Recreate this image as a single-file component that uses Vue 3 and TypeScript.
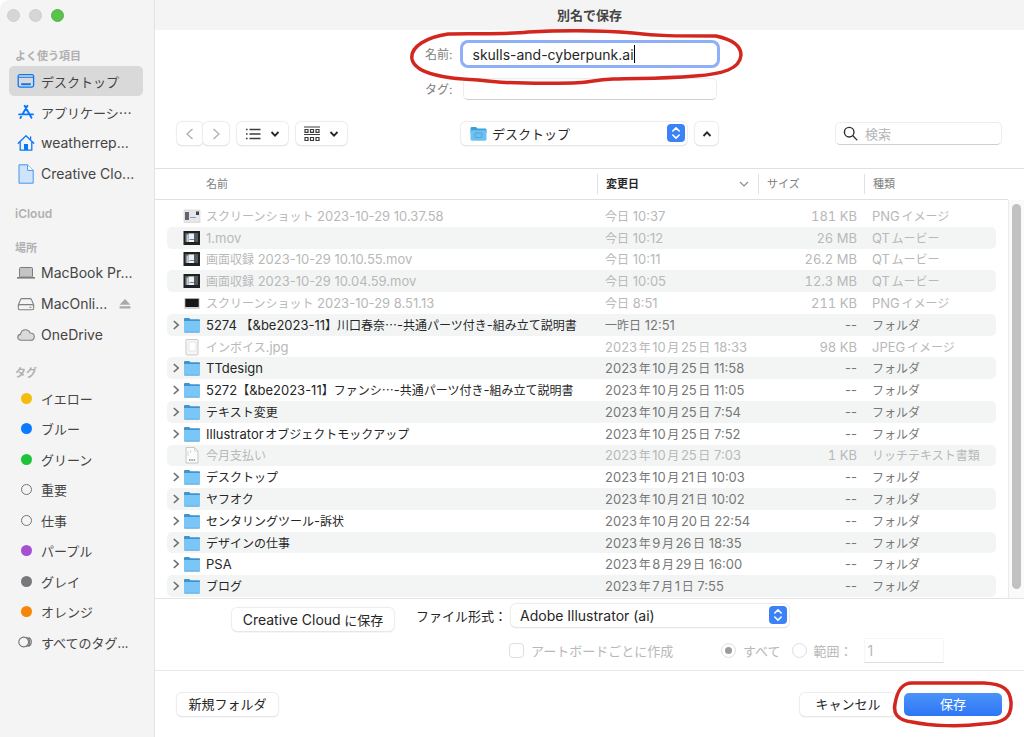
<script setup lang="ts">
import { ref } from 'vue'

type FileIcon = 'folder' | 'shot' | 'movie' | 'dark' | 'jpeg' | 'rtf'

interface FileRow {
  name: string
  date: string
  size: string
  kind: string
  icon: FileIcon
}

const fileName = ref('skulls-and-cyberpunk.ai')
const tags = ref('')
const query = ref('')
const scope = ref('all')

const folder = (name: string, date: string): FileRow => ({ name, date, size: '--', kind: 'フォルダ', icon: 'folder' })

const rows: FileRow[] = [
  { name: 'スクリーンショット 2023-10-29 10.37.58', date: '今日 10:37', size: '181 KB', kind: 'PNGイメージ', icon: 'shot' },
  { name: '1.mov', date: '今日 10:12', size: '26 MB', kind: 'QTムービー', icon: 'movie' },
  { name: '画面収録 2023-10-29 10.10.55.mov', date: '今日 10:11', size: '26.2 MB', kind: 'QTムービー', icon: 'movie' },
  { name: '画面収録 2023-10-29 10.04.59.mov', date: '今日 10:05', size: '12.3 MB', kind: 'QTムービー', icon: 'movie' },
  { name: 'スクリーンショット 2023-10-29 8.51.13', date: '今日 8:51', size: '211 KB', kind: 'PNGイメージ', icon: 'dark' },
  folder('5274 【&be2023-11】川口春奈…-共通パーツ付き-組み立て説明書', '一昨日 12:51'),
  { name: 'インボイス.jpg', date: '2023年10月25日 18:33', size: '98 KB', kind: 'JPEGイメージ', icon: 'jpeg' },
  folder('TTdesign', '2023年10月25日 11:58'),
  folder('5272【&be2023-11】ファンシ…-共通パーツ付き-組み立て説明書', '2023年10月25日 11:05'),
  folder('テキスト変更', '2023年10月25日 7:54'),
  folder('Illustratorオブジェクトモックアップ', '2023年10月25日 7:52'),
  { name: '今月支払い', date: '2023年10月25日 7:03', size: '1 KB', kind: 'リッチテキスト書類', icon: 'rtf' },
  folder('デスクトップ', '2023年10月21日 10:03'),
  folder('ヤフオク', '2023年10月21日 10:02'),
  folder('センタリングツール-訴状', '2023年10月20日 22:54'),
  folder('デザインの仕事', '2023年9月26日 18:35'),
  folder('PSA', '2023年8月29日 16:00'),
  folder('ブログ', '2023年7月1日 7:55'),
]

const tagItems = [
  { name: 'イエロー', tone: 'yellow' },
  { name: 'ブルー', tone: 'blue' },
  { name: 'グリーン', tone: 'green' },
  { name: '重要', tone: 'hollow' },
  { name: '仕事', tone: 'hollow' },
  { name: 'パープル', tone: 'purple' },
  { name: 'グレイ', tone: 'gray' },
  { name: 'オレンジ', tone: 'orange' },
]

// Japanese runs are set one size smaller than Latin ones, in the CJK family.
const pieces = (text: string) =>
  text
    .split(/([\u2026\u3000-\u9fff]+)/)
    .filter(Boolean)
    .map((part) => ({ part, cjk: /[\u2026\u3000-\u9fff]/.test(part) }))
</script>

<template>
  <div class="dialog">
    <nav class="sidebar" aria-label="サイドバー">
      <div class="lights">
        <button type="button" class="light" aria-label="閉じる"></button>
        <button type="button" class="light" aria-label="しまう"></button>
        <button type="button" class="light zoom" aria-label="拡大"></button>
      </div>

      <h2>よく使う項目</h2>
      <ul>
        <li>
          <a href="#desktop" class="item current">
            <svg class="glyph" viewBox="0 0 18 18" fill="none" stroke="#0a78fa" stroke-width="1.3">
              <rect x="1.2" y="2.7" width="15.4" height="12.4" rx="1.8" />
              <path d="M1.5 5.3h15" stroke-width="1" />
              <rect x="4.2" y="11.2" width="9.6" height="2" fill="#0a78fa" stroke="none" />
            </svg>
            <span class="cjk">デスクトップ</span>
          </a>
        </li>
        <li>
          <a href="#applications" class="item">
            <svg class="glyph" viewBox="0 0 18 18" fill="none" stroke="#0a78fa" stroke-width="1.9" stroke-linecap="round">
              <path d="M10.4 2.8 5.5 11.2M7.6 2.8l6.9 12M4.1 13.8l-.7 1.1M2.2 11.4h8.6M13.2 11.4h2.8" />
            </svg>
            <span class="cjk">アプリケーシ…</span>
          </a>
        </li>
        <li>
          <a href="#home" class="item">
            <svg class="glyph" viewBox="0 0 18 18" fill="none" stroke="#0a78fa" stroke-width="1.3" stroke-linejoin="round" stroke-linecap="round">
              <path d="M1.2 9.2 9 1.8l7.8 7.4M3.2 7.8v8.4h11.6V7.8M13.6 5.6V2.8" />
              <path d="M7 16V10h4v6z" fill="#0a78fa" stroke="none" />
            </svg>
            <span>weatherrep...</span>
          </a>
        </li>
        <li>
          <a href="#creative-cloud" class="item">
            <svg class="glyph tall" viewBox="0 0 18 20" fill="#cfe3fa" stroke="#4a94ee" stroke-width="1" stroke-linejoin="round">
              <path d="M2 .8h8.6l5.6 5.6v12.8H2z" />
              <path d="M10.6.8v5.6h5.6" fill="#fff" />
            </svg>
            <span>Creative Clo...</span>
          </a>
        </li>
      </ul>

      <h2 class="cloud">iCloud</h2>

      <h2 class="places">場所</h2>
      <ul>
        <li>
          <a href="#macbook" class="item">
            <svg class="glyph" viewBox="0 0 18 18" fill="#c4c4c4" stroke="#7c7c7c">
              <rect x="2.5" y="3.5" width="13" height="9.6" rx="1" />
              <path d="M0 13.8h18" stroke-width="1.6" />
            </svg>
            <span>MacBook Pr...</span>
          </a>
        </li>
        <li>
          <a href="#maconline" class="item">
            <svg class="glyph" viewBox="0 0 18 18" fill="none" stroke="#808080" stroke-width="1.1" stroke-linejoin="round">
              <path d="M5 3.6h8c.8 0 1.2.3 1.5 1l2.2 5.4v3c0 1.1-.7 1.8-1.8 1.8H3.1c-1.1 0-1.8-.7-1.8-1.8v-3l2.2-5.4c.3-.7.7-1 1.5-1z" />
              <path d="M1.5 10.4c.5-.6 1-.8 1.8-.8h11.4c.8 0 1.3.2 1.8.8M12.4 12.3h2" />
            </svg>
            <span>MacOnli...</span>
            <svg class="eject" viewBox="0 0 12 12" fill="#a9a9a9"><path d="M6 1l5.4 5.8H.6zM.6 8.3h10.8v2.2H.6z" /></svg>
          </a>
        </li>
        <li>
          <a href="#onedrive" class="item">
            <svg class="glyph" viewBox="0 0 18 18" fill="#dadada" stroke="#808080" stroke-width="1.1">
              <path d="M4.3 14.3C2.2 14.3.8 13 .8 11.3c0-1.6 1.2-2.8 2.7-2.900C3.9 5.500 6 3.700 8.500 3.700c2.200 0 3.900 1.300 4.600 3.300 2.400 0 4.200 1.500 4.200 3.700 0 2.100-1.600 3.600-3.800 3.600z" />
            </svg>
            <span>OneDrive</span>
          </a>
        </li>
      </ul>

      <h2 class="tag-title">タグ</h2>
      <ul class="tag-list">
        <li v-for="tag in tagItems" :key="tag.name">
          <a href="#tags" class="item"><i class="dot" :class="tag.tone"></i><span class="cjk">{{ tag.name }}</span></a>
        </li>
        <li>
          <a href="#all-tags" class="item">
            <svg class="glyph" viewBox="0 0 18 18" fill="none" stroke="#757575" stroke-width="1.1">
              <circle cx="6.7" cy="9" r="4.9" />
              <path d="M9.2 4.3a4.900 4.900 0 0 1 0 9.400M11.600 4.600a4.900 4.900 0 0 1 0 8.800" />
            </svg>
            <span class="cjk">すべてのタグ...</span>
          </a>
        </li>
      </ul>
    </nav>

    <main class="panel">
      <header class="titlebar"><h1>別名で保存</h1></header>

      <div class="fields">
        <label for="file-name">名前:</label>
        <div class="name-wrap">
          <input id="file-name" v-model="fileName" class="text-field focused" type="text" />
          <i class="caret"></i>
          <svg class="mark name-mark" viewBox="0 0 336 60" fill="none" stroke="#d3261f" stroke-width="3.5" stroke-linecap="round" stroke-linejoin="round">
            <path d="M40 5C60 4 95 6 120 3C160 1 190 1 225 4C250 7 265 7 308 7C322 10 333 16 333 26C332 40 315 45 287 47C250 50 235 49 205 50C185 51 180 54 165 54C120 55 85 53 70 51C40 50 7 45 4 30C2 17 20 8 40 5Z" />
          </svg>
        </div>
        <label for="file-tags">タグ:</label>
        <input id="file-tags" v-model="tags" class="text-field" type="text" />
      </div>

      <div class="toolbar">
        <div class="tools">
          <div class="history">
            <button type="button" class="push nav" aria-label="戻る"><svg viewBox="0 0 10 14"><path d="M7.5 2 2 7l5.5 5" /></svg></button>
            <button type="button" class="push nav" aria-label="進む"><svg viewBox="0 0 10 14"><path d="M2.5 2 8 7l-5.5 5" /></svg></button>
          </div>
          <button type="button" class="push view" aria-label="リスト表示">
            <svg class="view-icon" viewBox="0 0 16 16" stroke="#3c3c3c" stroke-width="1.3">
              <path d="M4.5 3.5h11M4.5 8h11M4.5 12.5h11M1 3.5h1.6M1 8h1.6M1 12.5h1.6" />
            </svg>
            <svg class="chev" viewBox="0 0 10 6"><path d="M1.5 1 5 4.6 8.5 1" /></svg>
          </button>
          <button type="button" class="push view" aria-label="グループ">
            <svg class="view-icon" viewBox="0 0 16 16" fill="none" stroke="#3c3c3c" stroke-width="1.2">
              <path d="M0 1h16M0 8.5h16" />
              <path d="M1 3.5h3v2.8H1zM6.5 3.5h3v2.8h-3zM12 3.5h3v2.8h-3zM1 11.5h3v3H1zM6.5 11.5h3v3h-3zM12 11.5h3v3h-3z" />
            </svg>
            <svg class="chev" viewBox="0 0 10 6"><path d="M1.5 1 5 4.6 8.5 1" /></svg>
          </button>
        </div>

        <div class="location">
          <div class="popup place">
            <svg class="popup-folder" viewBox="0 0 17 16">
              <path d="M.5 2.5C.5 1.6 1 1 2 1h4l1.5 1.4H15c1 0 1.5.6 1.5 1.5v3H.5z" fill="#3f9ed3" />
              <path d="M.5 4.3h16v9c0 .9-.6 1.4-1.5 1.4H2c-.9 0-1.5-.5-1.5-1.4z" fill="#6dc2f1" />
              <rect x="5" y="7" width="7" height="4.6" rx=".6" fill="none" stroke="#4aa6d8" />
            </svg>
            <select aria-label="場所"><option>デスクトップ</option></select>
            <svg class="stepper" viewBox="0 0 18 18"><rect width="18" height="18" rx="4" /><path d="M5.8 7 9 3.9 12.2 7M5.8 11 9 14.1 12.2 11" /></svg>
          </div>
          <button type="button" class="push up" aria-label="折りたたむ"><svg class="chev" viewBox="0 0 10 6"><path d="M1.5 5 5 1.4 8.5 5" /></svg></button>
        </div>

        <div class="search">
          <svg viewBox="0 0 16 16" fill="none" stroke="#303030" stroke-width="1.5" stroke-linecap="round"><circle cx="6.6" cy="6.6" r="5.1" /><path d="m10.5 10.5 4.3 4.3" /></svg>
          <input v-model="query" type="search" placeholder="検索" aria-label="検索" />
        </div>
      </div>

      <div class="browser">
        <table>
          <thead>
            <tr>
              <th scope="col" class="c-name">名前</th>
              <th scope="col" class="sorted">変更日<svg viewBox="0 0 10 6"><path d="M1 1l4 4 4-4" /></svg></th>
              <th scope="col">サイズ</th>
              <th scope="col">種類</th>
            </tr>
          </thead>
          <tbody>
            <tr v-for="row in rows" :key="row.name" :class="{ dim: row.icon !== 'folder' }">
              <td class="name">
                <svg v-if="row.icon === 'folder'" class="disclose" viewBox="0 0 8 10"><path d="M1.8 1 6.2 5 1.8 9" /></svg>
                <i v-else class="disclose"></i>
                <svg class="file" viewBox="0 0 18 18">
                  <template v-if="row.icon === 'folder'">
                    <path d="M1 3.2C1 2.4 1.5 2 2.2 2h4l1.3 1.3h8.3c.8 0 1.2.5 1.2 1.2V8H1z" fill="#3f93cf" />
                    <path d="M1 5h16v10.4c0 .8-.5 1.2-1.2 1.2H2.2c-.7 0-1.2-.4-1.2-1.2z" fill="#7ac6f6" />
                    <path d="M1.6 16.2h14.8" stroke="#57a5d8" stroke-width=".8" />
                  </template>
                  <template v-else-if="row.icon === 'shot'">
                    <rect x="1" y="3" width="16" height="12.5" fill="#e6e6e8" stroke="#cfcfcf" stroke-width=".6" />
                    <path d="M2 5h4v8H2z" fill="#64666a" /><path d="M13 4.5h3V8h-3z" fill="#3f4144" />
                    <path d="M7 10.5h6" stroke="#6f9fe8" />
                  </template>
                  <template v-else-if="row.icon === 'movie'">
                    <rect x=".5" y="2" width="16.5" height="14" fill="#1f2123" />
                    <rect x="2" y="4" width="13" height="9" fill="#56595c" />
                    <path d="M5.500 4.500H11V13H5.500z" fill="#f0f1f2" /><path d="M3.500 5.500h2V13h-2z" fill="#c8cbce" />
                    <path d="M6.500 10.500H11" stroke="#4a8be0" />
                  </template>
                  <template v-else-if="row.icon === 'dark'">
                    <rect x="1.3" y="4" width="15.4" height="11" fill="#d2d2d2" />
                    <rect x="2.3" y="4.8" width="13.4" height="8.2" fill="#161616" />
                  </template>
                  <template v-else-if="row.icon === 'jpeg'">
                    <rect x="3" y="1.5" width="12" height="15.5" rx=".8" fill="#f7f7f7" stroke="#c9c9c9" />
                    <path d="M6 4h7v9H6z" fill="#fff" stroke="#ddd" stroke-width=".7" />
                  </template>
                  <template v-else>
                    <path d="M3 1.5h8.5L15 5v12H3z" fill="#fbfbfb" stroke="#c6c6c6" />
                    <path d="M11.5 1.5V5H15M5 5v5M7.5 4v3" fill="none" stroke="#d0d0d0" stroke-width=".8" />
                    <path d="M6 14h1.5M8.3 14h1.5M10.6 14h1.5" stroke="#8a8a8a" stroke-width="1.4" />
                  </template>
                </svg>
                <span class="label"><span v-for="(p, i) in pieces(row.name)" :key="i" :class="{ cjk: p.cjk }">{{ p.part }}</span></span>
              </td>
              <td><span v-for="(p, i) in pieces(row.date)" :key="i" :class="{ cjk: p.cjk }">{{ p.part }}</span></td>
              <td class="size">{{ row.size }}</td>
              <td><span v-for="(p, i) in pieces(row.kind)" :key="i" :class="{ cjk: p.cjk }">{{ p.part }}</span></td>
            </tr>
          </tbody>
        </table>
        <div class="scrollbar"><i></i></div>
      </div>

      <div class="options">
        <button type="button" class="push cloud-save"><span><span class="latin">Creative Cloud</span> に保存</span></button>
        <div class="format">
          <div class="format-row">
            <label for="format">ファイル形式：</label>
            <div class="popup kind">
              <select id="format"><option>Adobe Illustrator (ai)</option></select>
              <svg class="stepper" viewBox="0 0 18 18"><rect width="18" height="18" rx="4" /><path d="M5.8 7 9 3.9 12.2 7M5.8 11 9 14.1 12.2 11" /></svg>
            </div>
          </div>
          <div class="board-row">
            <label class="choice board"><input type="checkbox" disabled />アートボードごとに作成</label>
            <label class="choice"><input v-model="scope" type="radio" value="all" disabled />すべて</label>
            <label class="choice"><input v-model="scope" type="radio" value="range" disabled />範囲：</label>
            <input class="range" type="text" value="1" disabled aria-label="範囲" />
          </div>
        </div>
      </div>

      <footer class="actions">
        <button type="button" class="push new-folder">新規フォルダ</button>
        <button type="button" class="push cancel">キャンセル</button>
        <div class="save-wrap">
          <button type="button" class="save">保存</button>
          <svg class="mark save-mark" viewBox="0 0 122 48" fill="none" stroke="#d3261f" stroke-width="3.5" stroke-linecap="round" stroke-linejoin="round">
            <path d="M20 3H92C112 4 118 10 119 22C120 38 112 43 90 44C68 47 40 46 20 42C5 40 1 33 3 24C5 12 9 3 20 3Z" />
          </svg>
        </div>
      </footer>
    </main>
  </div>
</template>

<style>
body {
  margin: 0;
  background: #fff;
}
</style>

<style scoped>
.dialog {
  display: flex;
  min-height: 100vh;
  font: 13px/20px Inter, "Noto Sans CJK JP", sans-serif;
  color: #262626;
  background: #fff;
}
.dialog *,
.dialog *::before {
  box-sizing: border-box;
}
button,
input,
select {
  font: inherit;
  color: inherit;
  margin: 0;
}
.cjk {
  font-family: "Noto Sans CJK JP", sans-serif;
  line-height: 1;
}
.latin {
  font-size: 14px;
}

/* sidebar */
.sidebar {
  display: flex;
  flex-direction: column;
  flex: none;
  width: 155px;
  padding: 0 11px 79px 9px;
  background: #f4f4f4;
  border-right: 1px solid #e3e3e3;
  border-top-left-radius: 9px;
}
.lights {
  display: flex;
  gap: 9px;
  height: 46px;
  padding-top: 9px;
  margin-left: -2px;
}
.light {
  width: 13px;
  height: 13px;
  padding: 0;
  border: 1px solid #cdcdcd;
  border-radius: 50%;
  background: #d6d6d6;
}
.light.zoom {
  border-color: #51b445;
  background: #5bc24e;
}
.sidebar h2 {
  margin: 0 0 0 6px;
  font-size: 11px;
  line-height: 20px;
  font-weight: 600;
  color: #b0b0b0;
}
.sidebar h2.cloud {
  margin-top: 15px;
  font-size: 12px;
}
.sidebar h2.places {
  margin-top: 14px;
}
.sidebar h2.tag-title {
  margin-top: 13px;
}
.sidebar ul {
  display: grid;
  gap: 1px;
  margin: 0;
  padding: 0;
  list-style: none;
}
.sidebar ul.tag-list {
  flex: 1;
  gap: 0;
  grid-auto-rows: 1fr;
}
.item {
  display: flex;
  align-items: center;
  gap: 6px;
  height: 30px;
  padding-left: 8px;
  border-radius: 5px;
  font-size: 14px;
  color: #454545;
  text-decoration: none;
  white-space: nowrap;
}
.item .cjk {
  font-size: 13px;
}
.item.current {
  background: #d9d9d9;
}
.glyph {
  flex: none;
  width: 18px;
  height: 18px;
}
.glyph.tall {
  height: 20px;
}
.eject {
  width: 12px;
  height: 12px;
  margin-left: 6px;
}
.dot {
  width: 11px;
  height: 11px;
  margin: 0 3px 0 4px;
  border-radius: 50%;
}
.yellow { background: #f2bd0c; }
.blue { background: #0a7aff; }
.green { background: #1ec337; }
.purple { background: #a550d2; }
.gray { background: #78787c; }
.orange { background: #f58608; }
.hollow { border: 1px solid #757575; }

/* panel */
.panel {
  display: flex;
  flex-direction: column;
  flex: 1;
  min-width: 0;
}
.titlebar {
  height: 30px;
  background: #f4f4f4;
}
.titlebar h1 {
  margin: 0;
  font-size: 13px;
  line-height: 30px;
  font-weight: 600;
  text-align: center;
  color: #454545;
}
.fields {
  display: grid;
  grid-template-columns: 1fr 254px 1fr;
  gap: 13px 10px;
  padding-top: 13px;
}
.fields label {
  grid-column: 1;
  font-size: 12px;
  line-height: 24px;
  height: 22px;
  text-align: right;
  color: #808080;
}
.name-wrap {
  position: relative;
}
.text-field {
  display: block;
  width: 100%;
  height: 22px;
  padding: 0 9px;
  border: 1px solid #ececec;
  border-bottom-color: #cfcfcf;
  border-radius: 5px;
  background: #fff;
  font-size: 14px;
  outline: none;
}
.text-field.focused {
  border-color: #fff;
  box-shadow: 0 0 0 3px #8fb0f8;
}
.caret {
  position: absolute;
  top: 2px;
  left: 171px;
  width: 1px;
  height: 18px;
  background: #000;
}
.mark {
  position: absolute;
  pointer-events: none;
}
.name-mark {
  top: -14px;
  left: -55px;
  width: 336px;
  height: 60px;
}

/* toolbar */
.toolbar {
  display: grid;
  grid-template-columns: 1fr 257px 1fr;
  padding: 22px 22px 23px;
}
.tools,
.location,
.history {
  display: flex;
}
.tools,
.location {
  gap: 8px;
}
.push {
  display: flex;
  align-items: center;
  justify-content: center;
  height: 23px;
  padding: 0;
  border: 0;
  border-radius: 5px;
  background: #fff;
  box-shadow: 0 0 1px 1px #ececec, 0 1px 1px #bdbdbd;
}
.push.nav {
  width: 26px;
}
.nav svg {
  width: 10px;
  height: 14px;
  fill: none;
  stroke: #adadad;
  stroke-width: 1.3;
}
.push.view {
  gap: 9px;
  width: 51px;
}
.view-icon {
  width: 16px;
  height: 16px;
}
.chev {
  width: 10px;
  height: 6px;
  fill: none;
  stroke: #262626;
  stroke-width: 1.8;
}
.popup {
  position: relative;
  height: 23px;
  border-radius: 5px;
  background: #fff;
  box-shadow: 0 0 1px 1px #ececec, 0 1px 1px #bdbdbd;
}
.popup select {
  display: block;
  width: 100%;
  height: 23px;
  padding: 0 24px 0 9px;
  border: 0;
  background: none;
  appearance: none;
  outline: none;
}
.popup.kind select {
  font-size: 14px;
}
.popup.place {
  width: 226px;
}
.popup.place select {
  padding-left: 31px;
}
.popup-folder {
  position: absolute;
  top: 4px;
  left: 9px;
  width: 17px;
  height: 16px;
}
.stepper {
  position: absolute;
  top: 2px;
  right: 2px;
  width: 18px;
  height: 18px;
  fill: none;
  stroke: #fff;
  stroke-width: 1.6;
  stroke-linecap: round;
  stroke-linejoin: round;
  pointer-events: none;
}
.stepper rect {
  fill: #3b82f7;
  stroke: none;
}
.push.up {
  width: 23px;
}
.search {
  display: flex;
  align-items: center;
  justify-self: end;
  gap: 7px;
  width: 167px;
  height: 23px;
  padding: 0 7px;
  border: 1px solid #ececec;
  border-bottom-color: #cfcfcf;
  border-radius: 5px;
}
.search svg {
  flex: none;
  width: 15px;
  height: 15px;
}
.search input {
  width: 100%;
  min-width: 0;
  padding: 0;
  border: 0;
  background: none;
  outline: none;
}
.search input::placeholder {
  color: #b5b5b5;
}

/* file list */
.browser {
  display: flex;
  flex: 1;
  border-top: 1px solid #e0e0e0;
  border-bottom: 1px solid #e4e4e4;
}
table {
  display: flex;
  flex-direction: column;
  flex: 1;
}
thead {
  display: block;
  padding: 0 12px;
  border-bottom: 1px solid #e0e0e0;
}
tbody {
  display: grid;
  flex: 1;
  grid-auto-rows: 1fr;
  padding: 5px 12px 1px;
}
tr {
  display: grid;
  grid-template-columns: 1fr 161px 106px 132px;
  align-items: center;
}
thead tr {
  height: 30px;
}
th {
  display: flex;
  align-items: center;
  justify-content: space-between;
  height: 20px;
  padding: 0 9px 0 8px;
  border-left: 1px solid #e0e0e0;
  font-size: 11px;
  font-weight: 400;
  color: #808080;
}
th.c-name {
  padding-left: 39px;
  border-left: 0;
}
th.sorted {
  font-weight: 700;
  color: #262626;
}
th svg {
  width: 10px;
  height: 6px;
  fill: none;
  stroke: #8a8a8a;
  stroke-width: 1.2;
}
tbody tr {
  border-radius: 5px;
  color: #777;
}
tbody tr:nth-child(even) {
  background: #f3f5f5;
}
tbody tr.dim {
  color: #b8b8b8;
}
td {
  padding: 0 0 0 8px;
  line-height: 20px;
  white-space: nowrap;
  text-autospace: normal;
}
td .cjk {
  font-size: 12px;
}
td.name {
  display: flex;
  align-items: center;
  padding-left: 5px;
  color: #262626;
}
.dim td.name {
  color: #b8b8b8;
}
td.size {
  padding-right: 7px;
  text-align: right;
}
.dim td.size {
  font-variant-numeric: tabular-nums;
}
.disclose {
  flex: none;
  width: 8px;
  height: 10px;
  fill: none;
  stroke: #6c6c6c;
  stroke-width: 1.6;
}
.file {
  flex: none;
  width: 18px;
  height: 18px;
  margin: 0 5px 0 3px;
}
.scrollbar {
  display: flex;
  flex: none;
  width: 16px;
  margin-top: 31px;
  padding: 4px 3px 9px;
  border-left: 1px solid #ebebeb;
  background: #fafafa;
}
.scrollbar i {
  width: 9px;
  border-radius: 5px;
  background: #c1c1c1;
}

/* options */
.options {
  display: flex;
  align-items: flex-start;
  gap: 22px;
  padding: 5px 22px 7px 77px;
  border-bottom: 1px solid #e8e8e8;
}
.cloud-save {
  width: 162px;
  margin-top: 4px;
}
.format-row {
  display: flex;
  align-items: center;
}
.format-row label {
  width: 95px;
}
.popup.kind {
  width: 278px;
}
.board-row {
  display: flex;
  align-items: center;
  gap: 11px;
  margin: 11px 0 0 93px;
  color: #b8b8b8;
}
.choice {
  display: flex;
  align-items: center;
  gap: 7px;
}
.choice.board {
  width: 201px;
}
.choice input {
  display: grid;
  place-content: center;
  width: 15px;
  height: 15px;
  border: 1px solid #dedede;
  border-radius: 4px;
  background: #fff;
  appearance: none;
}
.choice input[type="radio"] {
  border-radius: 50%;
}
.choice input:checked::before {
  content: "";
  width: 7px;
  height: 7px;
  border-radius: 50%;
  background: #9b9b9b;
}
.range {
  width: 80px;
  height: 25px;
  padding: 0 3px;
  border: 1px solid #f6f6f6;
  border-bottom-color: #dcdcdc;
  background: #fff;
  font-size: 14px;
}

/* actions */
.actions {
  display: flex;
  align-items: center;
  height: 66px;
  padding: 0 22px;
}
.new-folder {
  width: 101px;
}
.cancel {
  width: 96px;
  margin-left: auto;
}
.save-wrap {
  position: relative;
  margin-left: 8px;
}
.save {
  display: block;
  width: 98px;
  height: 23px;
  padding: 0;
  border: 0;
  border-radius: 5px;
  background: linear-gradient(#4a93f8, #2f76f6);
  color: #fff;
}
.save-mark {
  top: -13px;
  left: -12px;
  width: 122px;
  height: 48px;
}
</style>
